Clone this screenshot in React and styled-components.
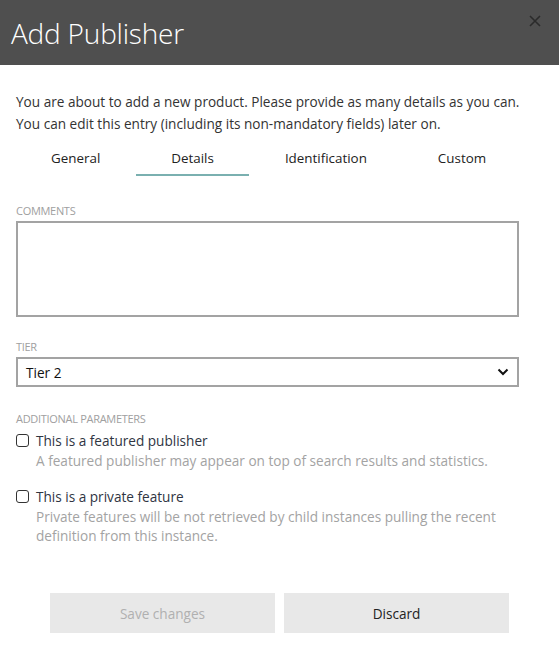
import React, { useState } from 'react';
import styled, { createGlobalStyle } from 'styled-components';

const Global = createGlobalStyle`
  html, body { margin: 0; padding: 0; background: #fff; }
  body { font-family: "Open Sans", "Noto Sans", sans-serif; }
  * { box-sizing: border-box; }
`;

const tabs = ['General', 'Details', 'Identification', 'Custom'];

function App() {
  const [active, setActive] = useState(1);

  return (
    <Dialog>
      <Global />
      <Header>
        <Title>Add Publisher</Title>
        <Close aria-label="close">
          <svg width="12" height="12" viewBox="0 0 12 12">
            <path d="M1 1 L11 11 M11 1 L1 11" stroke="#2b2b2b" strokeWidth="1.6" />
          </svg>
        </Close>
      </Header>
      <Body>
        <Intro>
          You are about to add a new product. Please provide as many details as you can.
          You can edit this entry (including its non-mandatory fields) later on.
        </Intro>
        <Tabs>
          {tabs.map((t, i) => (
            <Tab key={t} active={i === active} onClick={() => setActive(i)}>{t}</Tab>
          ))}
        </Tabs>

        <Field space={28}>
          <Label>Comments</Label>
          <TextArea />
        </Field>

        <Field space={23}>
          <Label>Tier</Label>
          <SelectBox>
            <span>Tier 2</span>
            <svg width="12" height="8" viewBox="0 0 12 8">
              <path d="M1.5 1.5 L6 6 L10.5 1.5" fill="none" stroke="#111" strokeWidth="2" />
            </svg>
          </SelectBox>
        </Field>

        <Field space={25}>
          <Label>Additional parameters</Label>
          <Option>
            <Check type="checkbox" />
            <div>
              <OptionTitle>This is a featured publisher</OptionTitle>
              <OptionHint>A featured publisher may appear on top of search results and statistics.</OptionHint>
            </div>
          </Option>
          <Option>
            <Check type="checkbox" />
            <div>
              <OptionTitle>This is a private feature</OptionTitle>
              <OptionHint>Private features will be not retrieved by child instances pulling the recent definition from this instance.</OptionHint>
            </div>
          </Option>
        </Field>

        <Actions>
          <Button disabled>Save changes</Button>
          <Button>Discard</Button>
        </Actions>
      </Body>
    </Dialog>
  );
}

export default App;

const Dialog = styled.div`
  width: 559px;
  height: 648px;
  background: #fff;
`;

const Header = styled.div`
  height: 65px;
  background: #4f4f4f;
  display: flex;
  align-items: flex-start;
  justify-content: space-between;
  padding: 13px 18px 0 11px;
`;

const Title = styled.h1`
  margin: 0;
  font-size: 28px;
  font-weight: 300;
  color: #fff;
  line-height: 40px;
  letter-spacing: -0.2px;
`;

const Close = styled.div`
  margin-top: 2px;
  display: flex;
`;

const Body = styled.div`
  padding: 26px 30px 0 16px;
`;

const Intro = styled.p`
  margin: 0;
  font-size: 13.6px;
  line-height: 22px;
  color: #333;
`;

const Tabs = styled.div`
  display: flex;
  gap: 1px;
  margin: 11px 0 0 0;
`;

const Tab = styled.div`
  padding: 3px 35px 7px;
  font-size: 13.4px;
  line-height: 18px;
  color: #222;
  cursor: pointer;
  border-bottom: 2px solid ${p => (p.active ? '#7ab0b0' : 'transparent')};
`;

const Field = styled.div`
  margin-top: ${p => p.space}px;
`;

const Label = styled.div`
  font-size: 11px;
  text-transform: uppercase;
  color: #a0a0a0;
  letter-spacing: -0.3px;
  line-height: 14px;
  margin-bottom: 3px;
`;

const TextArea = styled.textarea`
  display: block;
  width: 503px;
  height: 96px;
  border: 2px solid #a3a3a3;
  resize: none;
  outline: none;
`;

const SelectBox = styled.div`
  width: 503px;
  height: 30px;
  border: 2px solid #a3a3a3;
  display: flex;
  align-items: center;
  justify-content: space-between;
  padding: 0 8px 0 8px;
  font-size: 13.6px;
  color: #111;
`;

const Option = styled.label`
  display: flex;
  align-items: flex-start;
  gap: 7px;
  margin-bottom: 16px;
  margin-top: 4px;
`;

const Check = styled.input`
  appearance: none;
  width: 13px;
  height: 13px;
  margin: 4px 0 0 0;
  border: 1px solid #333;
  border-radius: 3px;
  background: #fff;
  flex: none;
`;

const OptionTitle = styled.div`
  font-size: 13.6px;
  line-height: 21px;
  color: #2f3542;
`;

const OptionHint = styled.div`
  font-size: 13.6px;
  line-height: 19px;
  color: #a3a3a3;
  max-width: 480px;
`;

const Actions = styled.div`
  display: flex;
  gap: 9px;
  margin: 48px 0 0 34px;
`;

const Button = styled.button`
  width: 225px;
  height: 40px;
  border: none;
  background: #e8e8e8;
  font-family: inherit;
  font-size: 13.6px;
  color: ${p => (p.disabled ? '#b0b0b0' : '#222')};
`;
